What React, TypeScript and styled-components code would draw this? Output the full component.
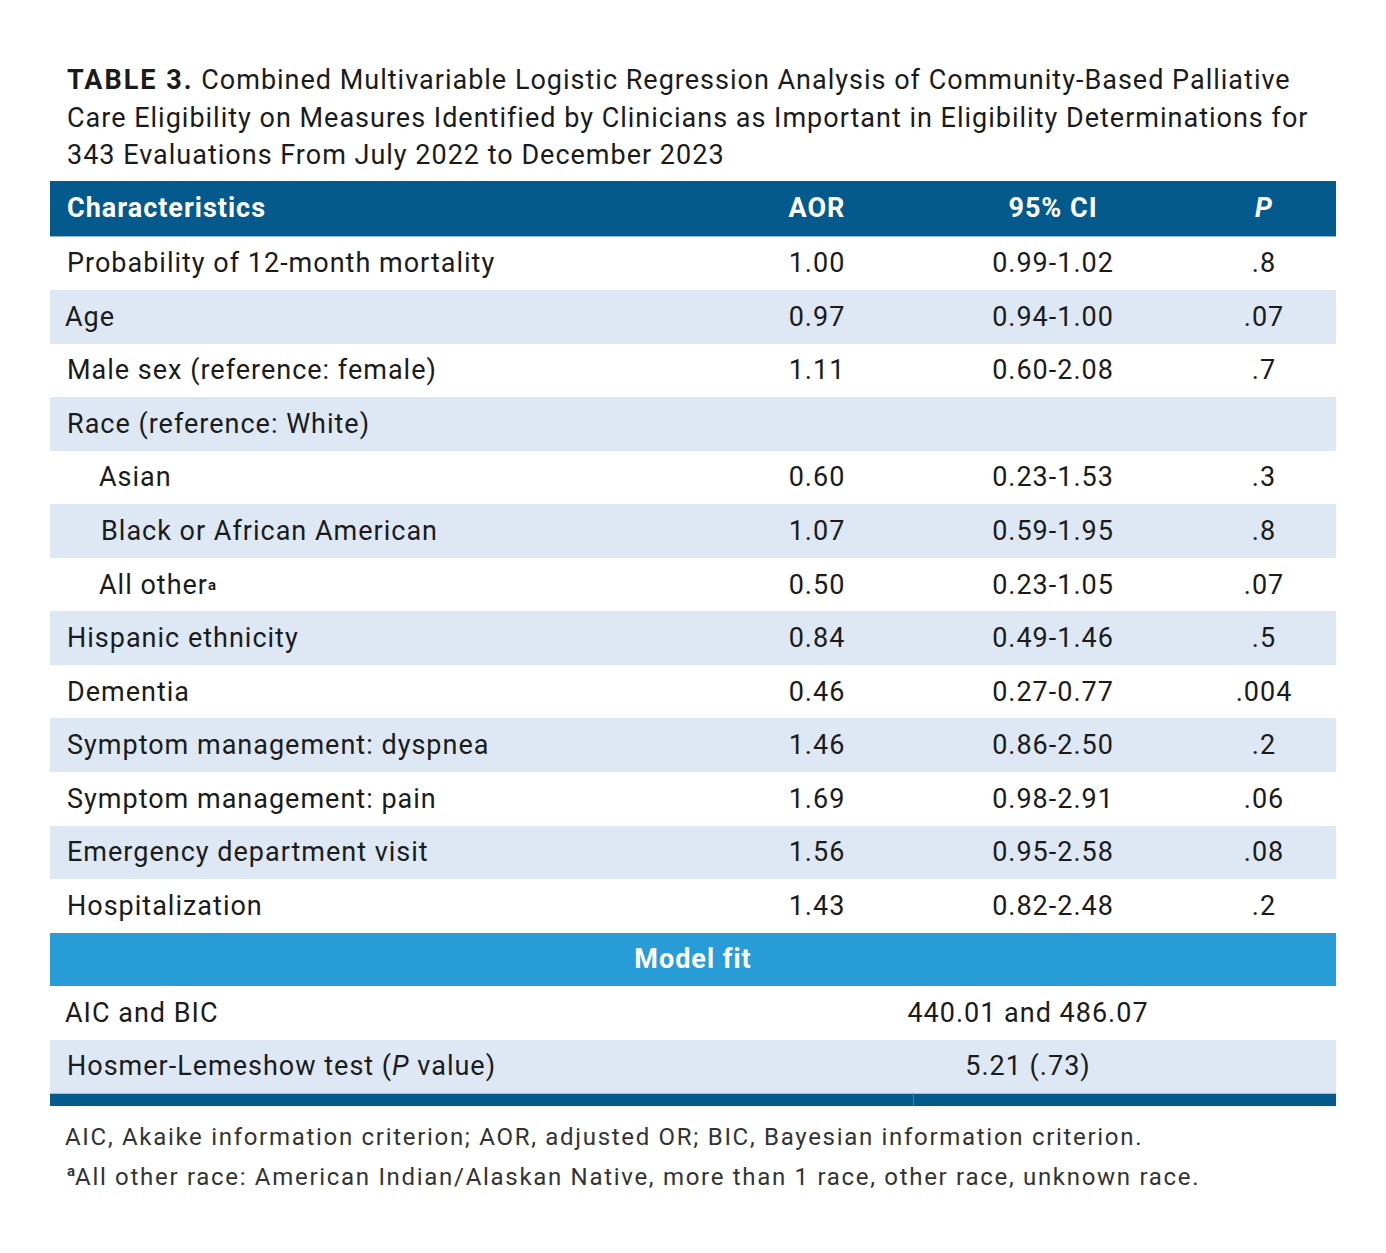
import React from "react";
import styled, { createGlobalStyle } from "styled-components";

const Global = createGlobalStyle`
  html, body { margin: 0; padding: 0; background: #ffffff; }
  body { font-family: Roboto, "Liberation Sans", sans-serif; color: #1b1b1b; letter-spacing: 1px; }
`;

const Page = styled.div`
  padding: 62px 50px 40px 50px;
  width: 1286px;
`;

const Caption = styled.div`
  padding: 0 0 0 17px;
  font-size: 27px;
  line-height: 37.5px;
  color: #1b1b1b;
  margin-bottom: 6.5px;
  white-space: nowrap;
`;

const CaptionLabel = styled.span`
  font-weight: 700;
  letter-spacing: 2px;
`;

const Table = styled.div`
  display: grid;
  grid-template-columns: 670px 194px 278px 144px;
`;

const HeadCell = styled.div<{ $align?: "left" | "center"; $italic?: boolean }>`
  background: #045a8d;
  color: #ffffff;
  font-weight: 700;
  font-size: 27px;
  height: 55.5px;
  display: flex;
  align-items: center;
  justify-content: ${(p) => (p.$align === "left" ? "flex-start" : "center")};
  padding-left: ${(p) => (p.$align === "left" ? "17px" : "0")};
  font-style: ${(p) => (p.$italic ? "italic" : "normal")};
  box-sizing: border-box;
  border-bottom: 1px solid #8fb6d6;
`;

const Cell = styled.div<{
  $stripe?: boolean;
  $align?: "left" | "center";
  $indent?: number;
  $span?: number;
}>`
  background: ${(p) => (p.$stripe ? "#dde8f4" : "#ffffff")};
  height: 53.56px;
  display: flex;
  align-items: center;
  justify-content: ${(p) => (p.$align === "left" ? "flex-start" : "center")};
  padding-left: ${(p) => (p.$align === "left" ? `${p.$indent ?? 17}px` : "0")};
  font-size: 27px;
  color: #1b1b1b;
  grid-column: ${(p) => (p.$span ? `span ${p.$span}` : "auto")};
  white-space: nowrap;
`;

const SectionBar = styled.div`
  grid-column: 1 / -1;
  background: #289cd7;
  color: #ffffff;
  font-weight: 700;
  font-size: 27px;
  height: 53.56px;
  display: flex;
  align-items: center;
  justify-content: center;
`;

const EndBar = styled.div<{ $span: number; $seam?: boolean }>`
  grid-column: span ${(p) => p.$span};
  background: #045a8d;
  height: 12px;
  border-top: 1px solid #9fc0dc;
  border-right: ${(p) => (p.$seam ? "1px solid #3f7fae" : "none")};
`;

const Sup = styled.sup`
  font-size: 15px;
  vertical-align: 9px;
  line-height: 0;
  font-weight: 700;
  letter-spacing: 0;
`;

const Notes = styled.div`
  padding: 11px 0 0 15px;
  font-size: 24px;
  line-height: 40px;
  letter-spacing: 1.7px;
  color: #333333;
  white-space: nowrap;
`;

const Note = styled.div<{ $pad?: number }>`
  padding-left: ${(p) => p.$pad ?? 0}px;
`;

const Ital = styled.i`
  font-style: italic;
`;

type Row = {
  label: React.ReactNode;
  aor?: string;
  ci?: string;
  p?: string;
  indent?: number;
};

const rows: Row[] = [
  { label: "Probability of 12-month mortality", aor: "1.00", ci: "0.99-1.02", p: ".8" },
  { label: "Age", aor: "0.97", ci: "0.94-1.00", p: ".07", indent: 15 },
  { label: "Male sex (reference: female)", aor: "1.11", ci: "0.60-2.08", p: ".7" },
  { label: "Race (reference: White)" },
  { label: "Asian", aor: "0.60", ci: "0.23-1.53", p: ".3", indent: 49 },
  { label: "Black or African American", aor: "1.07", ci: "0.59-1.95", p: ".8", indent: 51 },
  {
    label: (
      <>
        All other<Sup>a</Sup>
      </>
    ),
    aor: "0.50",
    ci: "0.23-1.05",
    p: ".07",
    indent: 49,
  },
  { label: "Hispanic ethnicity", aor: "0.84", ci: "0.49-1.46", p: ".5" },
  { label: "Dementia", aor: "0.46", ci: "0.27-0.77", p: ".004" },
  { label: "Symptom management: dyspnea", aor: "1.46", ci: "0.86-2.50", p: ".2" },
  { label: "Symptom management: pain", aor: "1.69", ci: "0.98-2.91", p: ".06" },
  { label: "Emergency department visit", aor: "1.56", ci: "0.95-2.58", p: ".08" },
  { label: "Hospitalization", aor: "1.43", ci: "0.82-2.48", p: ".2" },
];

export default function App() {
  return (
    <>
      <Global />
      <Page>
        <Caption>
          <CaptionLabel>TABLE 3.</CaptionLabel> Combined Multivariable Logistic Regression
          Analysis of Community-Based Palliative
          <br />
          Care Eligibility on Measures Identified by Clinicians as Important in Eligibility
          Determinations for
          <br />
          343 Evaluations From July 2022 to December 2023
        </Caption>
        <Table>
          <HeadCell $align="left">Characteristics</HeadCell>
          <HeadCell>AOR</HeadCell>
          <HeadCell>95% CI</HeadCell>
          <HeadCell $italic>P</HeadCell>
          {rows.map((r, i) => {
            const stripe = i % 2 === 1;
            return (
              <React.Fragment key={i}>
                <Cell $stripe={stripe} $align="left" $indent={r.indent}>
                  {r.label}
                </Cell>
                <Cell $stripe={stripe}>{r.aor}</Cell>
                <Cell $stripe={stripe}>{r.ci}</Cell>
                <Cell $stripe={stripe}>{r.p}</Cell>
              </React.Fragment>
            );
          })}
          <SectionBar>Model fit</SectionBar>
          <Cell $align="left" $indent={15}>AIC and BIC</Cell>
          <Cell $span={3}>440.01 and 486.07</Cell>
          <Cell $stripe $align="left">
            Hosmer-Lemeshow test (<Ital>P</Ital>&nbsp;value)
          </Cell>
          <Cell $stripe $span={3}>5.21 (.73)</Cell>
          <EndBar $span={2} $seam />
          <EndBar $span={2} />
        </Table>
        <Notes>
          <Note>AIC, Akaike information criterion; AOR, adjusted OR; BIC, Bayesian information criterion.</Note>
          <Note $pad={2}>
            <Sup>a</Sup>All other race: American Indian/Alaskan Native, more than 1 race, other race, unknown race.
          </Note>
        </Notes>
      </Page>
    </>
  );
}
